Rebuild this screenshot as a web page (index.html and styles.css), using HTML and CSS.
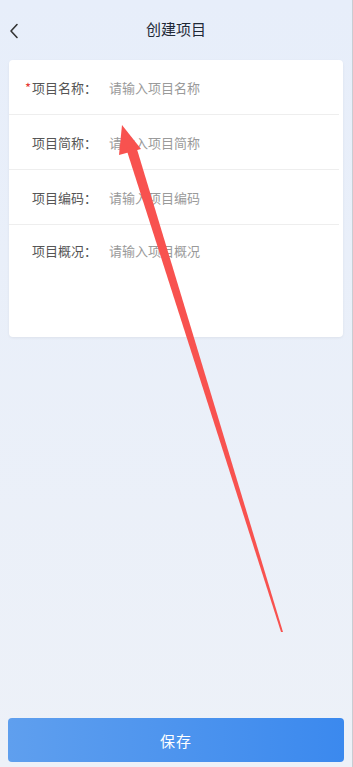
FILE: index.html
```html
<!DOCTYPE html>
<html>
<head>
    <title>创建项目</title>
    <meta name="viewport" content="width=device-width, initial-scale=1.0">
    <link rel="stylesheet" href="styles.css">
</head>
<body>
    <div class="page">
        <div class="header">
            <span class="back">
                <svg width="10" height="16" viewBox="0 0 10 16"><path d="M8 1.5 L2 8 L8 14.5" fill="none" stroke="#333" stroke-width="1.6" stroke-linecap="round" stroke-linejoin="round"/></svg>
            </span>
            <h1>创建项目</h1>
        </div>

        <div class="card">
            <div class="row">
                <div class="label"><span class="star">*</span>项目名称：</div>
                <div class="input">请输入项目名称</div>
            </div>
            <div class="row">
                <div class="label">项目简称：</div>
                <div class="input">请输入项目简称</div>
            </div>
            <div class="row">
                <div class="label">项目编码：</div>
                <div class="input">请输入项目编码</div>
            </div>
            <div class="row row-area">
                <div class="label">项目概况：</div>
                <div class="input">请输入项目概况</div>
            </div>
        </div>

        <div class="footer">
            <button class="save-btn">保存</button>
        </div>
    </div>

    <!-- red annotation arrow drawn over the screenshot -->
    <svg class="annotation" width="353" height="767" viewBox="0 0 353 767">
        <polygon points="122,125 119,155 141,149" fill="#f8524f"/>
        <polygon points="126,148 136,146 283,632 281,632" fill="#f8524f"/>
    </svg>
</body>
</html>
```

FILE: styles.css
```css
body {
    margin: 0;
    font-family: "Noto Sans CJK SC", "Noto Sans", sans-serif;
    background: linear-gradient(180deg, #e7eefa 0%, #edf1f8 100%);
    min-height: 100vh;
}
.page {
    display: flex;
    flex-direction: column;
    min-height: 100vh;
    border-right: 1px solid #c9ccd2;
    box-sizing: border-box;
}
.header {
    height: 56px;
    display: flex;
    align-items: center;
    justify-content: center;
    position: relative;
}
.header h1 {
    margin: 0;
    font-size: 15px;
    font-weight: 400;
    color: #1f2937;
}
.back {
    position: absolute;
    left: 9px;
    top: 20px;
}
.card {
    margin: 4px 9px 0 9px;
    background-color: #fff;
    border-radius: 4px;
    box-shadow: 0 1px 3px rgba(0,0,0,0.06);
    padding-right: 4px;
}
.row {
    display: flex;
    align-items: center;
    height: 54px;
    border-bottom: 1px solid #eeeeee;
    font-size: 13px;
}
.row-area {
    align-items: flex-start;
    height: 112px;
    border-bottom: none;
    padding-top: 16px;
    box-sizing: border-box;
}
.label {
    width: 77px;
    padding-left: 23px;
    color: #555;
}
.star {
    color: #e53935;
    margin-left: -7px;
    display: inline-block;
    width: 7px;
}
.input {
    color: #9a9a9a;
}
.footer {
    margin-top: auto;
    padding: 0 8px 5px 8px;
}
.save-btn {
    width: 100%;
    height: 44px;
    border: none;
    border-radius: 4px;
    background: linear-gradient(90deg, #5f9fee 0%, #3b89ee 100%);
    color: #fff;
    font-size: 15px;
    font-family: inherit;
    letter-spacing: 1px;
}
.annotation {
    position: absolute;
    left: 0;
    top: 0;
    pointer-events: none;
}
```
